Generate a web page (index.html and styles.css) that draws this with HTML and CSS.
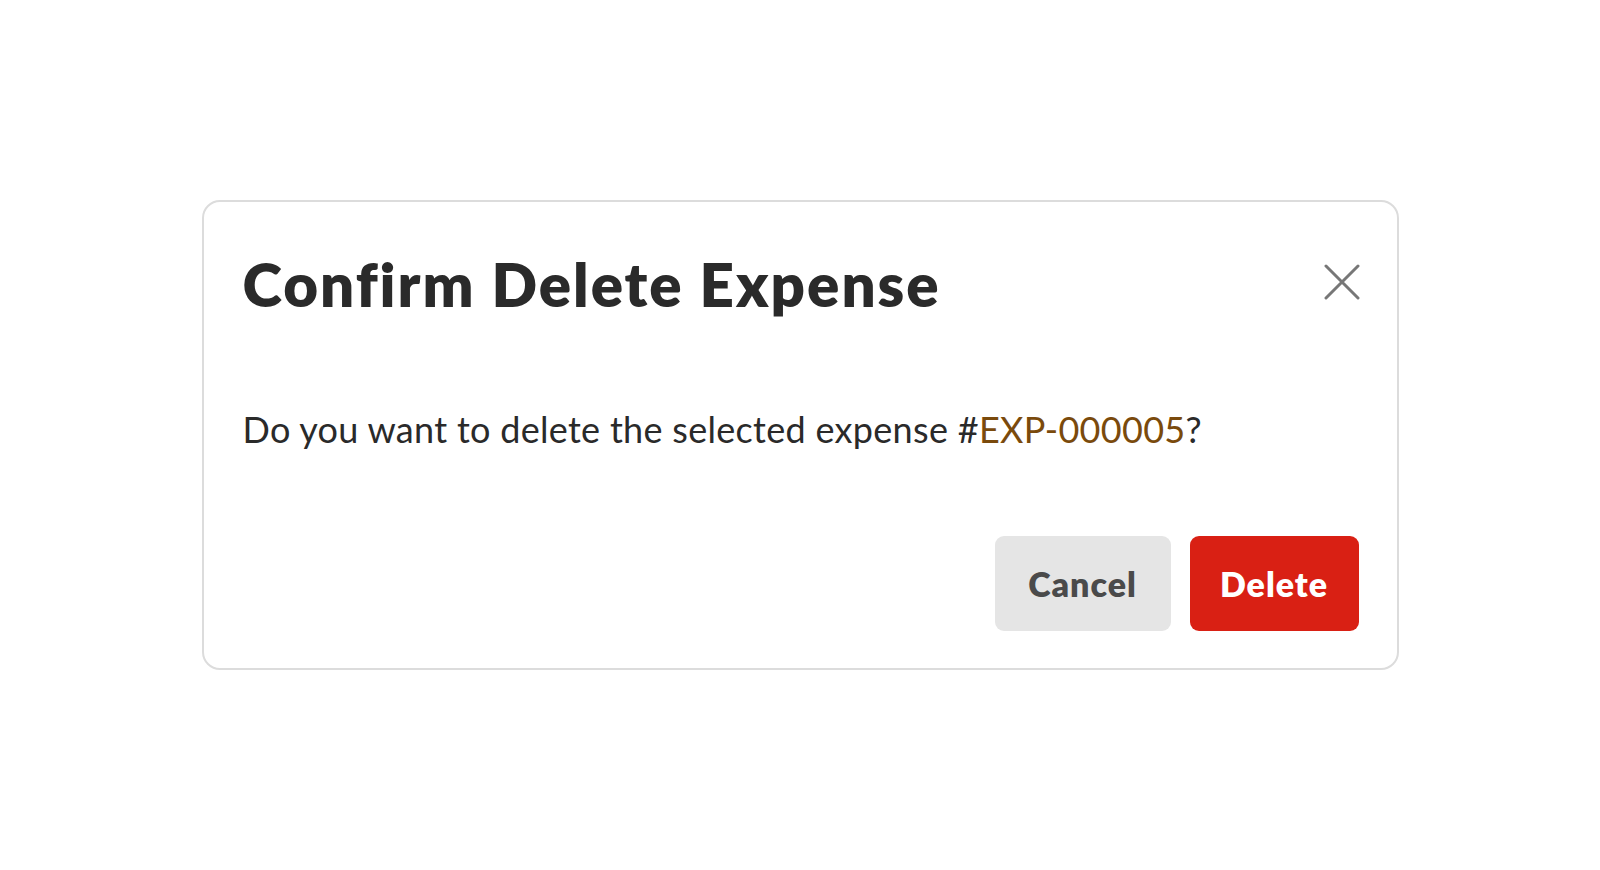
FILE: index.html
```html
<!DOCTYPE html>
<html lang="en">
<head>
<meta charset="utf-8">
<title>Confirm Delete Expense</title>
<link rel="stylesheet" href="styles.css">
</head>
<body>
<div class="page">
  <div class="dialog">
    <div class="dialog-header">
      <h1 class="dialog-title">Confirm Delete Expense</h1>
      <button class="close-btn" aria-label="Close">
        <svg width="36" height="36" viewBox="0 0 36 36"><path d="M2 2L34 34M34 2L2 34" stroke="#777" stroke-width="3" stroke-linecap="round" fill="none"/></svg>
      </button>
    </div>
    <p class="dialog-message">Do you want to delete the selected expense #<span class="ref">EXP-000005</span>?</p>
    <div class="dialog-actions">
      <button class="btn btn-cancel">Cancel</button>
      <button class="btn btn-delete">Delete</button>
    </div>
  </div>
</div>
</body>
</html>
```
FILE: styles.css
```css
html, body {
  margin: 0;
  padding: 0;
  background: #ffffff;
}
body {
  font-family: "Lato", "Noto Sans", sans-serif;
  color: #2a2a2a;
}
.page {
  padding-top: 200px;
  display: flex;
  justify-content: center;
}
.dialog {
  box-sizing: border-box;
  width: 1197px;
  height: 470px;
  border: 2px solid #dcdcdc;
  border-radius: 18px;
  padding: 44px 38px 37px 39px;
  display: flex;
  flex-direction: column;
}
.dialog-header {
  display: flex;
  justify-content: space-between;
  align-items: center;
}
.dialog-title {
  margin: 0;
  font-size: 60px;
  font-weight: 800;
  line-height: 76px;
  letter-spacing: 2px;
  color: #2a2a2a;
}
.close-btn {
  border: 0;
  background: none;
  padding: 0;
  width: 36px;
  height: 36px;
  margin-right: -1px;
  margin-bottom: 4px;
  cursor: pointer;
}
.dialog-message {
  margin: 82px 0 0;
  font-size: 36px;
  line-height: 50px;
  letter-spacing: 0.3px;
  color: #2a2a2a;
}
.ref {
  color: #7a4a0c;
}
.dialog-actions {
  margin-top: auto;
  display: flex;
  justify-content: flex-end;
  gap: 19px;
}
.btn {
  border: 0;
  height: 95px;
  border-radius: 9px;
  font-family: "Lato", "Noto Sans", sans-serif;
  font-weight: 800;
  font-size: 34px;
  letter-spacing: 1px;
  cursor: pointer;
}
.btn-cancel {
  width: 176px;
  background: #e5e5e5;
  color: #4a4a4a;
}
.btn-delete {
  width: 169px;
  background: #d92014;
  color: #ffffff;
}
```
